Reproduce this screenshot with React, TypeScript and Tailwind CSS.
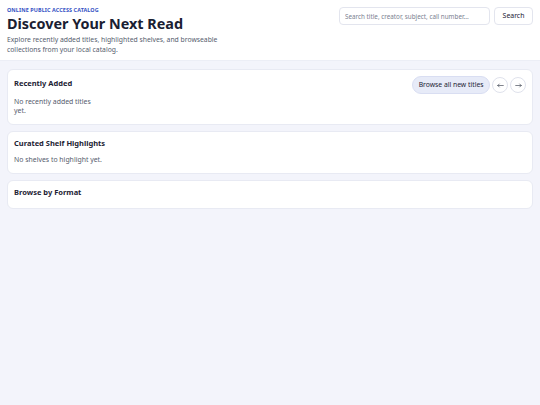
function Arrow({ dir }: { dir: 'left' | 'right' }) {
  return (
    <svg width="7" height="5" viewBox="0 0 7 5" fill="none" stroke="#2a3040" strokeWidth="0.6" strokeLinecap="round" strokeLinejoin="round">
      {dir === 'left' ? (
        <>
          <path d="M6.3 2.5H0.8" />
          <path d="M2.3 1L0.8 2.5L2.3 4" />
        </>
      ) : (
        <>
          <path d="M0.7 2.5H6.2" />
          <path d="M4.7 1L6.2 2.5L4.7 4" />
        </>
      )}
    </svg>
  );
}

export default function App() {
  return (
    <div className="min-h-[405px] bg-[#f3f4fb] text-[#1c2233]" style={{ fontFamily: '"Noto Sans", "Open Sans", sans-serif' }}>
      <header className="bg-white border-b border-[#eceef6] px-[7px] pt-[6px] pb-[6px] flex justify-between items-start">
        <div>
          <div className="text-[5.4px] font-bold tracking-[0.02em] uppercase text-[#3552c4] leading-[8px]">Online Public Access Catalog</div>
          <h1 className="text-[14.4px] font-bold leading-[20px] text-[#1a2032]">Discover Your Next Read</h1>
          <p className="mt-[1px] w-[226px] text-[6.8px] leading-[9.5px] text-[#555c6d]">
            Explore recently added titles, highlighted shelves, and browseable collections from your local catalog.
          </p>
        </div>
        <form className="flex gap-[4px] pt-[1px]" onSubmit={(e) => e.preventDefault()}>
          <input
            className="w-[151px] h-[18px] rounded-[4px] border border-[#e3e5ee] bg-white px-[5px] text-[6.3px] placeholder:text-[#7b8191] outline-none"
            placeholder="Search title, creator, subject, call number..."
          />
          <button className="h-[18px] w-[39px] rounded-[4px] border border-[#e3e5ee] bg-white text-[6.9px] text-[#1c2233]">Search</button>
        </form>
      </header>

      <main className="px-[7px] pt-[8px] flex flex-col gap-[6px]">
        <section className="bg-white rounded-[6px] border border-[#e8eaf3] px-[6px] pt-[6px] pb-[8.5px]">
          <div className="flex justify-between items-start">
            <h2 className="text-[7.5px] font-bold leading-[12px] pt-[1px]">Recently Added</h2>
            <div className="flex items-center gap-[2px]">
              <button className="h-[18px] px-[5.5px] rounded-full bg-[#e7ebf8] border border-[#d9def2] text-[6.8px] text-[#1c2233]">Browse all new titles</button>
              <button className="w-[16px] h-[16px] rounded-full border border-[#dfe2ec] bg-white flex items-center justify-center">
                <Arrow dir="left" />
              </button>
              <button className="w-[16px] h-[16px] rounded-full border border-[#dfe2ec] bg-white flex items-center justify-center">
                <Arrow dir="right" />
              </button>
            </div>
          </div>
          <p className="mt-[2.5px] w-[86px] text-[6.9px] leading-[9.5px] text-[#555c6d]">No recently added titles yet.</p>
        </section>

        <section className="bg-white rounded-[6px] border border-[#e8eaf3] px-[6px] pt-[5px] pb-[8px]">
          <h2 className="text-[7.5px] font-bold leading-[12px]">Curated Shelf Highlights</h2>
          <p className="mt-[6px] text-[6.9px] leading-[9.5px] text-[#555c6d]">No shelves to highlight yet.</p>
        </section>

        <section className="bg-white rounded-[6px] border border-[#e8eaf3] px-[6px] pt-[5px] pb-[10px]">
          <h2 className="text-[7.5px] font-bold leading-[12px]">Browse by Format</h2>
        </section>
      </main>
    </div>
  );
}
